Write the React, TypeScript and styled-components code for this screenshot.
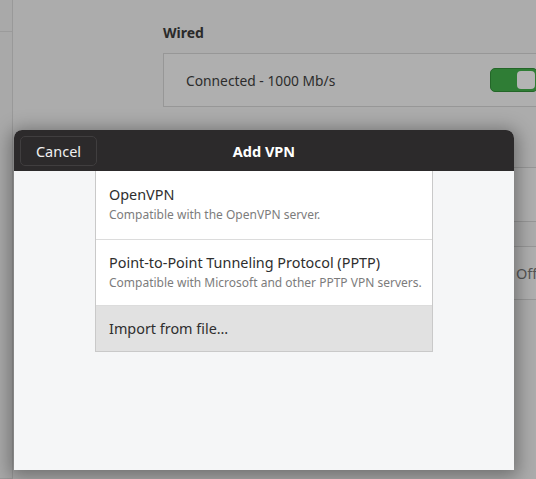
import React from "react";
import styled, { createGlobalStyle } from "styled-components";

const Global = createGlobalStyle`
  html, body { margin: 0; padding: 0; }
  body {
    width: 536px; height: 479px; overflow: hidden;
    font-family: "Noto Sans", "Open Sans", sans-serif;
    background: #acacac;
  }
  #root { width: 536px; height: 479px; }
`;

const Page = styled.div`
  position: relative;
  display: flex;
  width: 536px;
  height: 479px;
  overflow: hidden;
  background: #acacac;
`;

const Sidebar = styled.div`
  width: 12px;
  flex: none;
  border-right: 1px solid #999;
  background: #a9a9a9;
  display: flex;
  flex-direction: column;
`;

const SideItem = styled.div<{ $h: number }>`
  height: ${(p) => p.$h}px;
  flex: none;
  border-bottom: 1px solid #9b9b9b;
`;

const SideFill = styled.div`
  flex: 1;
`;

const Main = styled.div`
  flex: 1;
  padding: 22px 0 0 150px;
  display: flex;
  flex-direction: column;
`;

const Heading = styled.div`
  font-weight: 700;
  font-size: 14px;
  color: #2a2a2a;
  height: 22px;
  line-height: 22px;
`;

const Card = styled.div<{ $mt: number; $h: number }>`
  margin-top: ${(p) => p.$mt}px;
  height: ${(p) => p.$h}px;
  border: 1px solid #979797;
  border-right: none;
  background: #afafaf;
  display: flex;
  align-items: center;
  padding-left: 22px;
  font-size: 13.8px;
  color: #2c2c2c;
  width: 400px;
  box-sizing: border-box;
`;

const CardLabel = styled.div`
  flex: 1;
`;

const Toggle = styled.div`
  width: 48px;
  height: 24px;
  box-sizing: border-box;
  border-radius: 5px;
  background: #2f7d35;
  border: 1px solid #236628;
  position: relative;
  margin-right: 25px;
  &::after {
    content: "";
    position: absolute;
    top: 2px;
    right: 2px;
    width: 18px;
    height: 18px;
    border-radius: 4px;
    background: #b4b4b4;
  }
`;

const OffText = styled.div`
  font-size: 14.5px;
  color: #555;
  padding-left: 330px;
  white-space: nowrap;
`;

const Dialog = styled.div`
  position: absolute;
  left: 14px;
  top: 130px;
  width: 500px;
  height: 340px;
  border-radius: 8px 8px 0 0;
  box-shadow: 0 3px 18px 4px rgba(0, 0, 0, 0.35);
  display: flex;
  flex-direction: column;
  overflow: hidden;
  background: #f5f6f7;
`;

const Header = styled.div`
  height: 41px;
  flex: none;
  background: #2c2a2b;
  position: relative;
  display: flex;
  align-items: center;
  justify-content: center;
`;

const CancelButton = styled.button`
  position: absolute;
  left: 6px;
  top: 6px;
  width: 77px;
  height: 30px;
  border: 1px solid #403e3f;
  border-radius: 5px;
  background: #2c2a2b;
  color: #f0f0f0;
  font-family: inherit;
  font-size: 14.5px;
  padding: 0;
`;

const Title = styled.div`
  color: #ffffff;
  font-weight: 700;
  font-size: 14.5px;
`;

const Body = styled.div`
  flex: 1;
  padding-left: 81px;
`;

const List = styled.div`
  width: 338px;
  box-sizing: border-box;
  border: 1px solid #c9c9c9;
  border-top: none;
  background: #ffffff;
`;

const Row = styled.div<{ $h: number; $active?: boolean }>`
  height: ${(p) => p.$h}px;
  box-sizing: border-box;
  padding-left: 13px;
  display: flex;
  flex-direction: column;
  justify-content: center;
  background: ${(p) => (p.$active ? "#e1e1e1" : "#ffffff")};
  & + & { border-top: 1px solid #dcdcdc; }
`;

const RowTitle = styled.div`
  font-size: 14.4px;
  color: #2e2e2e;
  line-height: 20px;
`;

const RowSub = styled.div`
  font-size: 12px;
  color: #7c7c7c;
  line-height: 20px;
`;

export default function App() {
  return (
    <>
      <Global />
      <Page>
        <Sidebar>
          <SideItem $h={31} />
          <SideFill />
          <SideItem $h={41} />
        </Sidebar>
        <Main>
          <Heading>Wired</Heading>
          <Card $mt={9} $h={54}>
            <CardLabel>Connected - 1000 Mb/s</CardLabel>
            <Toggle />
          </Card>
          <Card $mt={60} $h={55} />
          <Card $mt={24} $h={54}>
            <OffText>Off</OffText>
          </Card>
        </Main>
        <Dialog>
          <Header>
            <CancelButton>Cancel</CancelButton>
            <Title>Add VPN</Title>
          </Header>
          <Body>
            <List>
              <Row $h={68}>
                <RowTitle>OpenVPN</RowTitle>
                <RowSub>Compatible with the OpenVPN server.</RowSub>
              </Row>
              <Row $h={66}>
                <RowTitle>Point-to-Point Tunneling Protocol (PPTP)</RowTitle>
                <RowSub>Compatible with Microsoft and other PPTP VPN servers.</RowSub>
              </Row>
              <Row $h={46} $active>
                <RowTitle>Import from file…</RowTitle>
              </Row>
            </List>
          </Body>
        </Dialog>
      </Page>
    </>
  );
}
